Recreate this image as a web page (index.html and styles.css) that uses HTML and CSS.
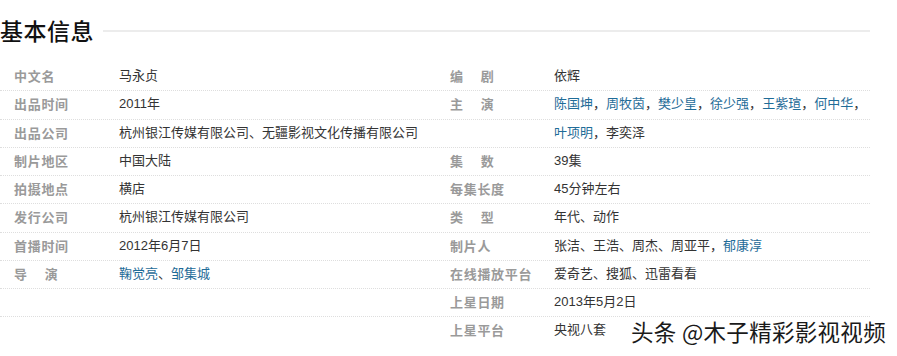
FILE: index.html
```html
<!DOCTYPE html>
<html lang="zh">
<head>
<meta charset="utf-8">
<title>基本信息</title>
<link rel="stylesheet" href="styles.css">
</head>
<body>
<div class="page">
  <div class="heading">
    <h2 class="heading-title">基本信息</h2>
    <div class="heading-rule"></div>
  </div>
  <div class="info">
    <dl class="col col-left">
      <div class="row"><dt class="label">中文名</dt><dd class="value">马永贞</dd></div>
      <div class="row"><dt class="label">出品时间</dt><dd class="value">2011年</dd></div>
      <div class="row"><dt class="label">出品公司</dt><dd class="value">杭州银江传媒有限公司、无疆影视文化传播有限公司</dd></div>
      <div class="row"><dt class="label">制片地区</dt><dd class="value">中国大陆</dd></div>
      <div class="row"><dt class="label">拍摄地点</dt><dd class="value">横店</dd></div>
      <div class="row"><dt class="label">发行公司</dt><dd class="value">杭州银江传媒有限公司</dd></div>
      <div class="row"><dt class="label">首播时间</dt><dd class="value">2012年6月7日</dd></div>
      <div class="row"><dt class="label">导<span class="gap"></span>演</dt><dd class="value"><a class="link">鞠觉亮</a>、<a class="link">邹集城</a></dd></div>
      <div class="row"><dt class="label"></dt><dd class="value"></dd></div>
    </dl>
    <dl class="col col-right">
      <div class="row"><dt class="label">编<span class="gap"></span>剧</dt><dd class="value">依辉</dd></div>
      <div class="row"><dt class="label">主<span class="gap"></span>演</dt><dd class="value"><a class="link">陈国坤</a>，<a class="link">周牧茵</a>，<a class="link">樊少皇</a>，<a class="link">徐少强</a>，<a class="link">王紫瑄</a>，<a class="link">何中华</a>，</dd></div>
      <div class="row"><dt class="label"></dt><dd class="value"><a class="link">叶项明</a>，李奕泽</dd></div>
      <div class="row"><dt class="label">集<span class="gap"></span>数</dt><dd class="value">39集</dd></div>
      <div class="row"><dt class="label">每集长度</dt><dd class="value">45分钟左右</dd></div>
      <div class="row"><dt class="label">类<span class="gap"></span>型</dt><dd class="value">年代、动作</dd></div>
      <div class="row"><dt class="label">制片人</dt><dd class="value">张洁、王浩、周杰、周亚平，<a class="link">郁康淳</a></dd></div>
      <div class="row"><dt class="label">在线播放平台</dt><dd class="value">爱奇艺、搜狐、迅雷看看</dd></div>
      <div class="row"><dt class="label">上星日期</dt><dd class="value">2013年5月2日</dd></div>
      <div class="row row-last"><dt class="label">上星平台</dt><dd class="value">央视八套</dd></div>
    </dl>
  </div>
  <div class="watermark">头条 @木子精彩影视视频</div>
</div>
</body>
</html>
```

FILE: styles.css
```css
html, body {
  margin: 0;
  padding: 0;
  background: #fff;
}

.page {
  position: relative;
  width: 897px;
  height: 356px;
  overflow: hidden;
  font-family: "Liberation Sans", "Noto Sans CJK SC", sans-serif;
}

.heading {
  display: flex;
  align-items: center;
  gap: 9px;
  width: 870px;
  padding-top: 16px;
  height: 28px;
}

.heading-title {
  margin: 0;
  font-family: "Noto Sans CJK SC", sans-serif;
  font-weight: 500;
  font-size: 23px;
  line-height: 28px;
  color: #111;
  letter-spacing: 0.5px;
}

.heading-rule {
  flex: 1;
  height: 2px;
  background: #ececec;
  margin-top: 2px;
}

.info {
  display: grid;
  grid-template-columns: 448px 421px;
  column-gap: 1px;
  margin-top: 19px;
}

.col {
  margin: 0;
  padding: 0;
}

.row {
  display: flex;
  box-sizing: border-box;
  height: 28.25px;
  border-bottom: 1px dotted #dedede;
  font-size: 13px;
  line-height: 26px;
}

.row-last {
  border-bottom-color: transparent;
}

.col-left .row {
  padding-left: 14px;
}

.col-right .row {
  padding-left: 1px;
}

.label {
  width: 104px;
  flex: none;
  margin: 0;
  color: #9a9a9a;
  font-weight: bold;
  letter-spacing: 0.7px;
  font-family: "Noto Sans CJK SC", sans-serif;
}

.col-left .label {
  width: 105px;
}

.gap {
  display: inline-block;
  width: 17px;
}

.value {
  margin: 0;
  color: #333;
  white-space: nowrap;
}

.link {
  color: #1f6c98;
  text-decoration: none;
}

.watermark {
  position: absolute;
  left: 631px;
  top: 316px;
  font-family: "Noto Sans CJK SC", sans-serif;
  font-size: 22.5px;
  line-height: 30px;
  color: #1a1a1a;
  letter-spacing: 0.3px;
  text-shadow: 1px 1px 0 #fff, -1px -1px 0 #fff, 1px -1px 0 #fff, -1px 1px 0 #fff;
}
```
